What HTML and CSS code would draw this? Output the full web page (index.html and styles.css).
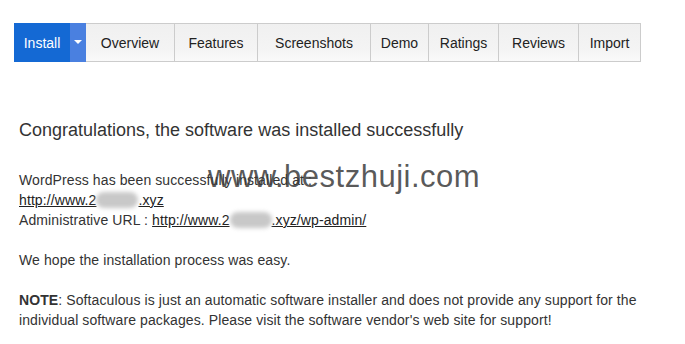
FILE: index.html
```html
<!DOCTYPE html>
<html>
<head>
    <title>Install</title>
    <link rel="stylesheet" href="styles.css">
</head>
<body>
    <div class="tabs">
        <a class="tab install">Install</a><a class="tab caret"><span class="tri"></span></a><a class="tab w89">Overview</a><a class="tab w83">Features</a><a class="tab w113">Screenshots</a><a class="tab w58">Demo</a><a class="tab w70">Ratings</a><a class="tab w80">Reviews</a><a class="tab w62">Import</a>
    </div>
    <div class="content">
        <h2>Congratulations, the software was installed successfully</h2>
        <div class="mark">www.bestzhuji.com</div>
        <p>WordPress has been successfully installed at :<br>
        <a class="link">http://www.2<span class="blur"></span>.xyz</a><br>
        Administrative URL : <a class="link">http://www.2<span class="blur"></span>.xyz/wp-admin/</a></p>
        <p>We hope the installation process was easy.</p>
        <p><b>NOTE</b>: Softaculous is just an automatic software installer and does not provide any support for the individual software packages. Please visit the software vendor's web site for support!</p>
    </div>
</body>
</html>
```
FILE: styles.css
```css
body {
    margin: 0;
    font-family: "Liberation Sans", Arial, sans-serif;
    color: #333;
    background: #fff;
}
.tabs {
    display: flex;
    margin: 23px 0 0 14px;
    height: 39px;
}
.tab {
    display: flex;
    align-items: center;
    justify-content: center;
    box-sizing: border-box;
    height: 39px;
    padding-top: 1px;
    font-size: 14px;
    color: #222;
    background: linear-gradient(#f0f0f0, #f4f4f4 70%, #fafafa);
    border: 1px solid #ccc;
    border-left: none;
}
.tab.install {
    width: 56px;
    background: #1469d4;
    color: #fff;
    border: none;
}
.tab.caret {
    width: 16px;
    background: #4a80e0;
    border: none;
}
.tri {
    width: 0;
    height: 0;
    border-left: 4px solid transparent;
    border-right: 4px solid transparent;
    border-top: 4px solid #fff;
    margin-top: -3px;
}
.w89 { width: 89px; }
.w83 { width: 83px; }
.w113 { width: 113px; }
.w58 { width: 58px; }
.w70 { width: 70px; }
.w80 { width: 80px; }
.w62 { width: 62px; }
.content {
    padding: 0 19px;
    font-size: 14px;
    line-height: 20px;
    position: relative;
}
.content h2 {
    font-size: 18px;
    font-weight: normal;
    margin: 57px 0 29px;
    line-height: 22px;
}
.content p {
    margin: 0 0 20px;
    letter-spacing: 0.1px;
}
.link {
    color: #222;
    text-decoration: underline;
}
.blur {
    display: inline-block;
    width: 42px;
    height: 16px;
    vertical-align: -3px;
    background: #c8c8c8;
    border-radius: 8px;
    filter: blur(2px);
}
.mark {
    position: absolute;
    left: 208px;
    top: 41px;
    font-size: 31px;
    line-height: 34px;
    color: rgba(60, 60, 60, 0.85);
    letter-spacing: 0.5px;
}
```
